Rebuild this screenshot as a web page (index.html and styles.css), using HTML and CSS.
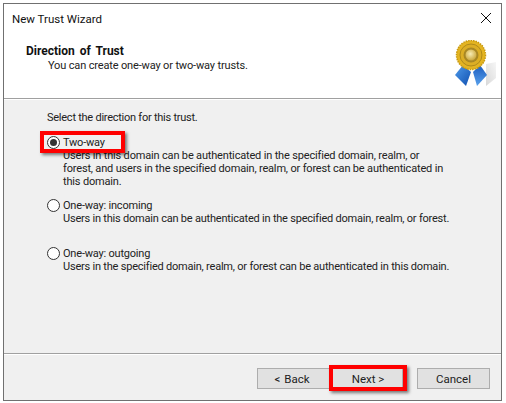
FILE: index.html
```html
<!DOCTYPE html>
<html lang="en">
<head>
  <meta charset="UTF-8" />
  <title>New Trust Wizard</title>
  <link rel="stylesheet" href="styles.css">
</head>
<body>
  <div class="window">
    <div class="titlebar">
      <span class="title">New Trust Wizard</span>
      <svg class="close" width="10" height="10" viewBox="0 0 10 10">
        <path d="M0 0 L10 10 M10 0 L0 10" stroke="#111" stroke-width="1" fill="none" />
      </svg>
    </div>

    <div class="header">
      <div class="header-text">
        <h1>Direction of Trust</h1>
        <p>You can create one-way or two-way trusts.</p>
      </div>
      <svg class="medal" width="42" height="50" viewBox="0 0 42 50">
        <defs>
          <radialGradient id="center" cx="0.45" cy="0.4" r="0.6">
            <stop offset="0" stop-color="#f8ecb4" />
            <stop offset="1" stop-color="#cba83e" />
          </radialGradient>
          <linearGradient id="ribbon-left" x1="0" y1="0" x2="1" y2="1">
            <stop offset="0" stop-color="#4f9bea" />
            <stop offset="1" stop-color="#0f4fb0" />
          </linearGradient>
          <linearGradient id="ribbon-right" x1="0" y1="0" x2="0" y2="1">
            <stop offset="0" stop-color="#1b5cc0" />
            <stop offset="1" stop-color="#5aa2ec" />
          </linearGradient>
          <linearGradient id="shade" x1="0" y1="1" x2="1" y2="0">
            <stop offset="0" stop-color="#d8d8d8" />
            <stop offset="1" stop-color="#f6f6f6" />
          </linearGradient>
        </defs>
        <path d="M31 24 L41 22 L41 38 L31 46 Z" fill="url(#shade)" />
        <path d="M8 25 L0 35 L11 46 L16 32 Z" fill="url(#ribbon-left)" />
        <path d="M25 25 L18 32 L22 46 L32 35 Z" fill="url(#ribbon-right)" />
        <circle cx="16" cy="15" r="14.5" fill="#e4b421" stroke="#c8990f" stroke-width="1.5" stroke-dasharray="1.5 1" />
        <circle cx="16" cy="15" r="11" fill="#dcae25" stroke="#b08a1a" stroke-width="1" />
        <circle cx="16" cy="15" r="7.5" fill="#a88724" />
        <circle cx="16" cy="15" r="5.5" fill="url(#center)" />
      </svg>
    </div>

    <div class="content">
      <p class="prompt">Select the direction for this trust.</p>

      <div class="option option-first">
        <label class="radio-row"><span class="radio checked"></span>Two-way</label>
        <p class="desc">Users in this domain can be authenticated in the specified domain, realm, or<br>forest, and users in the specified domain, realm, or forest can be authenticated in<br>this domain.</p>
      </div>

      <div class="option option-second">
        <label class="radio-row"><span class="radio"></span>One-way: incoming</label>
        <p class="desc desc-tight">Users in this domain can be authenticated in the specified domain, realm, or forest.</p>
      </div>

      <div class="option option-third">
        <label class="radio-row"><span class="radio"></span>One-way: outgoing</label>
        <p class="desc desc-tight">Users in the specified domain, realm, or forest can be authenticated in this domain.</p>
      </div>
    </div>

    <div class="footer">
      <button class="btn btn-back">&lt; Back</button>
      <button class="btn btn-next">Next &gt;</button>
      <button class="btn btn-cancel">Cancel</button>
    </div>
  </div>

  <div class="callout callout-twoway"></div>
  <div class="callout callout-next"></div>
</body>
</html>
```

FILE: styles.css
```css
html, body {
  margin: 0;
  padding: 0;
}
body {
  position: relative;
  width: 506px;
  height: 403px;
  background-color: white;
  font-family: 'Roboto', sans-serif;
  font-size: 11.5px;
  color: #222;
  overflow: hidden;
}
p, h1 {
  margin: 0;
}
.window {
  box-sizing: border-box;
  width: 499px;
  height: 398px;
  margin: 3px 0 0 3px;
  border: 1px solid #707070;
  background-color: #f0f0f0;
  display: flex;
  flex-direction: column;
}
.titlebar {
  height: 30px;
  background: white;
  display: flex;
  align-items: center;
  justify-content: space-between;
  padding: 0 10px 0 8px;
  color: #111;
}
.close {
  margin-bottom: 2px;
}
.header {
  box-sizing: border-box;
  height: 65px;
  background: white;
  border-bottom: 1px solid #a0a0a0;
  box-shadow: 0 1px 0 white;
  display: flex;
  justify-content: space-between;
  padding: 0 0 0 22px;
}
.header-text {
  padding-top: 9px;
}
.header h1 {
  font-size: 12px;
  font-weight: bold;
  word-spacing: 2px;
  line-height: 16px;
  color: #111;
}
.header p {
  padding-left: 22px;
  font-size: 11px;
  letter-spacing: -0.15px;
  line-height: 14px;
}
.medal {
  margin: 6px 4px 0 0;
}
.content {
  flex: 1;
  padding: 11px 0 0 43px;
}
.prompt {
  font-size: 11px;
  letter-spacing: -0.25px;
  line-height: 16px;
}
.option-first {
  margin-top: 9px;
}
.option-second {
  margin-top: 10px;
}
.option-third {
  margin-top: 21px;
}
.radio-row {
  display: flex;
  align-items: center;
  height: 14px;
  font-size: 11px;
  letter-spacing: -0.2px;
}
.radio {
  box-sizing: border-box;
  width: 13px;
  height: 13px;
  border: 1px solid #333;
  border-radius: 50%;
  background: white;
  margin-right: 3px;
  position: relative;
}
.radio.checked::after {
  content: "";
  position: absolute;
  left: 2px;
  top: 2px;
  width: 7px;
  height: 7px;
  border-radius: 50%;
  background: #333;
}
.desc {
  padding-left: 16px;
  font-size: 11px;
  letter-spacing: -0.17px;
  line-height: 13px;
}
.desc-tight {
  letter-spacing: -0.21px;
}
.footer {
  box-sizing: border-box;
  height: 47px;
  border-top: 1px solid #a0a0a0;
  box-shadow: inset 0 1px 0 white;
  display: flex;
  align-items: flex-start;
  padding: 14px 0 0 253px;
}
.btn {
  box-sizing: border-box;
  width: 73px;
  height: 21px;
  border: 1px solid #adadad;
  background: #e1e1e1;
  font-family: inherit;
  font-size: 11.5px;
  color: #222;
  padding: 0;
}
.btn-back {
  word-spacing: 1px;
  padding-right: 3px;
}
.btn-next {
  padding-left: 3px;
}
.btn-cancel {
  margin-left: 14px;
}
.callout {
  position: absolute;
  box-sizing: border-box;
  border: 4px solid #f00;
  box-shadow: 2px 2px 3px rgba(0,0,0,0.5);
}
.callout-twoway {
  left: 40px;
  top: 131px;
  width: 85px;
  height: 22px;
}
.callout-next {
  left: 329px;
  top: 365px;
  width: 78px;
  height: 26px;
}
```
